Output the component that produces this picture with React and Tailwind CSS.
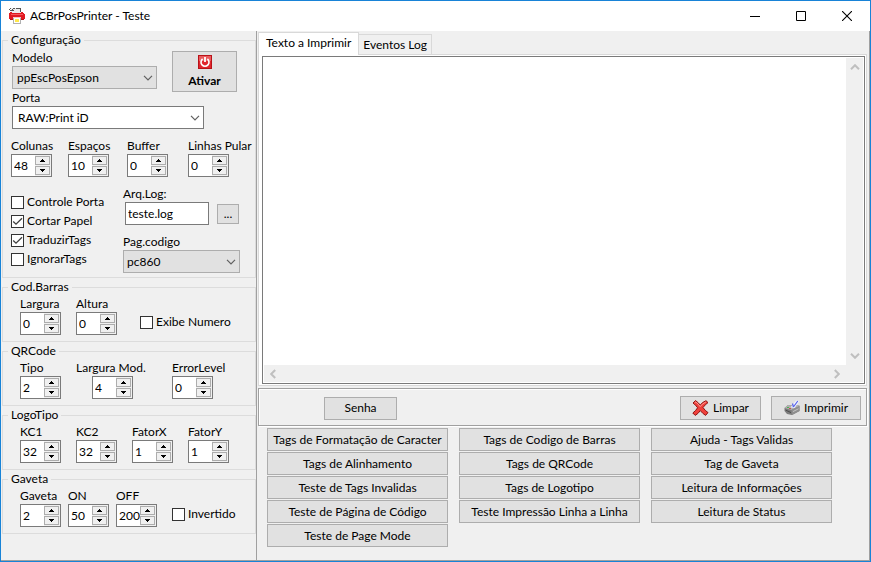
import { useState } from "react";

const MODELS = ["ppEscPosEpson", "ppEscBematech", "ppEscDaruma", "ppEscElgin"];
const PORTS = ["RAW:Print iD", "COM1", "COM2", "LPT1"];
const CODE_PAGES = ["pc860", "pc437", "pc850", "pc852", "pc1252"];

const ACTIONS = [
  "Tags de Formatação de Caracter",
  "Tags de Codigo de Barras",
  "Ajuda - Tags Validas",
  "Tags de Alinhamento",
  "Tags de QRCode",
  "Tag de Gaveta",
  "Teste de Tags Invalidas",
  "Tags de Logotipo",
  "Leitura de Informações",
  "Teste de Página de Código",
  "Teste Impressão Linha a Linha",
  "Leitura de Status",
  "Teste de Page Mode",
];

function Button({ className = "", children, ...props }) {
  return (
    <button
      type="button"
      className={`flex items-center justify-center border border-[#adadad] bg-[#e1e1e1] whitespace-nowrap ${className}`}
      {...props}
    >
      {children}
    </button>
  );
}

function Chevron({ className = "", color = "#606060", width = 1.2 }) {
  return (
    <svg className={className} width="10" height="6" viewBox="0 0 10 6" fill="none" aria-hidden="true">
      <path d="M1 0.8 L5 4.8 L9 0.8" stroke={color} strokeWidth={width} />
    </svg>
  );
}

function Group({ title, className = "", children }) {
  return (
    <fieldset className="ml-px min-w-0 border border-[#dcdcdc]">
      <legend className="ml-[5px] h-4 px-[3px]">{title}</legend>
      <div className={className}>{children}</div>
    </fieldset>
  );
}

function Combo({ id, label, options, className = "", selectClass = "" }) {
  return (
    <div className={className}>
      <label htmlFor={id} className="block h-4">
        {label}
      </label>
      <div className="relative">
        <select id={id} className={`block h-[23px] w-full appearance-none border outline-none ${selectClass}`}>
          {options.map((o) => (
            <option key={o}>{o}</option>
          ))}
        </select>
        <Chevron className="pointer-events-none absolute top-[9px] right-[4px]" />
      </div>
    </div>
  );
}

function Spin({ id, label, initial, className = "", boxClass = "" }) {
  const [value, setValue] = useState(initial);

  return (
    <div className={`shrink-0 ${className}`}>
      <label htmlFor={id} className="block h-4 whitespace-nowrap">
        {label}
      </label>
      <div className={`flex h-[23px] w-[41px] border border-[#7a7a7a] bg-white ${boxClass}`}>
        <input
          id={id}
          className="w-0 flex-1 pl-[2px] outline-none"
          value={value}
          onChange={(e) => setValue(Number(e.target.value) || 0)}
        />
        <div className="flex w-4 flex-col gap-px bg-[#f0f0f0] pt-px pr-px">
          <button
            type="button"
            aria-label={`${label} +`}
            className="flex h-[9px] items-center justify-center border border-[#adadad]"
            onClick={() => setValue(value + 1)}
          >
            <svg width="5" height="3" viewBox="0 0 5 3" aria-hidden="true">
              <path d="M2 0h1v1h1v1h1v1H0V2h1V1h1z" />
            </svg>
          </button>
          <button
            type="button"
            aria-label={`${label} -`}
            className="flex h-[9px] items-center justify-center border border-[#adadad]"
            onClick={() => setValue(value - 1)}
          >
            <svg width="5" height="3" viewBox="0 0 5 3" aria-hidden="true">
              <path d="M0 0h5v1H4v1H3v1H2V2H1V1H0z" />
            </svg>
          </button>
        </div>
      </div>
    </div>
  );
}

function Check({ label, checked = false, className = "" }) {
  return (
    <label className={`flex items-center gap-[3px] whitespace-nowrap ${className}`}>
      <span className="relative flex">
        <input
          type="checkbox"
          defaultChecked={checked}
          className="peer size-[13px] appearance-none border border-[#333333] bg-white"
        />
        <svg
          className="pointer-events-none absolute inset-0 hidden peer-checked:block"
          width="13"
          height="13"
          viewBox="0 0 13 13"
          fill="none"
          aria-hidden="true"
        >
          <path d="M2.2 6.5 L5 9.2 L11 3.2" stroke="#404040" strokeWidth="1.3" />
        </svg>
      </span>
      {label}
    </label>
  );
}

function AppIcon() {
  return (
    <svg width="16" height="16" viewBox="0 0 16 16" shapeRendering="crispEdges" aria-hidden="true">
      <path d="M2 0h10v6H2z" fill="#ececec" />
      <path d="M0 1h1v1H0zM1 0h1v1H1zM1 2h2v1H1zM3 1h1v2H3zM4 0h2v1H4zM7 0h5v1H7zM4 2h1v1H4zM11 1h1v3h-1z" fill="#555" />
      <path d="M1 4h2v1h9V4h2v1h1v1h1v5h-1v1H1v-1H0V5h1z" fill="#e01b22" />
      <path d="M2 6h12v1H2z" fill="#f4595d" />
      <path d="M1 11h14v1H1z" fill="#b81016" />
      <path d="M4 9h8v1H4z" fill="#f7c6c7" />
      <path d="M4 10h8v6H4z" fill="#b0b0b0" />
      <path d="M5 10h6v5H5z" fill="#fff" />
      <path d="M6 11h4v3H6z" fill="#ffe84a" />
    </svg>
  );
}

function PowerIcon() {
  return (
    <svg width="14" height="14" viewBox="0 0 14 14" fill="none" aria-hidden="true">
      <path d="M0 0h14v14H0z" fill="#b81218" />
      <path d="M1 1h12v12H1z" fill="#e0262c" />
      <path d="M1 1h12v5H1z" fill="#ea5a5e" />
      <path d="M4.6 4 A4 4 0 1 0 9.4 4" stroke="#fff" strokeWidth="1.6" />
      <path d="M7 2v5" stroke="#fff" strokeWidth="1.8" />
    </svg>
  );
}

function DeleteIcon() {
  return (
    <svg width="17" height="16" viewBox="0 0 17 16" aria-hidden="true">
      <path
        d="M1 3 L3.5 0.6 Q6 2.2 8.2 5 Q10.5 2 14 0.7 L16 2.6 Q13 4.6 11 7.6 Q13.2 10.8 16 12.6 L13.6 15.4 Q10.6 13.6 8.3 10.6 Q6.2 13.8 3.2 15.4 L0.8 13 Q3.8 10.8 5.6 7.8 Q3.8 5 1 3z"
        fill="#f0403c"
        stroke="#8e1411"
        strokeWidth="1"
      />
      <path d="M2.6 3 L3.8 2 Q6.2 3.8 8.2 6.6 Q10.4 3.6 13.8 2" stroke="#ff9a94" strokeWidth="1" fill="none" />
    </svg>
  );
}

function PrintIcon() {
  return (
    <svg width="16" height="16" viewBox="0 0 16 16" aria-hidden="true">
      <path d="M0.5 8 L4 5 L10 5.5 L15.5 5.5 V11 L8 15 L3 14 L0.5 11z" fill="#7d7d7d" />
      <path d="M0.5 8 L4 5 L10 5.5 L15.5 6 L7.5 10z" fill="#b0b0b0" />
      <path d="M7.5 10 L15.5 6 V11 L8 15z" fill="#8f8f8f" />
      <path d="M9 11.6 L14.5 8.8" stroke="#c4c4c4" strokeWidth="1" />
      <path d="M6.5 7.6 L12 0.6 L15.5 1 L10.6 8z" fill="#eef1ff" />
      <path d="M8.5 3.5 L9.4 7 M9.4 7 L13.8 1" stroke="#5560e8" strokeWidth="1.2" />
      <path d="M1.5 10 L7 12.6" stroke="#4b4b4b" strokeWidth="1" />
      <path d="M3 7h2v1H3z" fill="#4fae4f" />
      <path d="M5 8h2v1H5z" fill="#c9504b" />
    </svg>
  );
}

function TitleBar() {
  return (
    <header className="flex h-[30px] shrink-0 items-center bg-white pl-2">
      <AppIcon />
      <h1 className="flex-1 pl-[5px]">ACBrPosPrinter - Teste</h1>
      <button type="button" aria-label="Minimizar" className="flex h-full w-[46px] items-center justify-center">
        <svg width="10" height="10" viewBox="0 0 10 10" aria-hidden="true">
          <path d="M0 5h10v1H0z" />
        </svg>
      </button>
      <button type="button" aria-label="Maximizar" className="flex h-full w-[46px] items-center justify-center">
        <svg width="10" height="10" viewBox="0 0 10 10" fill="none" aria-hidden="true">
          <path d="M0.5 0.5h9v9h-9z" stroke="#000" />
        </svg>
      </button>
      <button type="button" aria-label="Fechar" className="flex h-full w-[46px] items-center justify-center">
        <svg width="10" height="10" viewBox="0 0 10 10" fill="none" aria-hidden="true">
          <path d="M0 0 L10 10 M10 0 L0 10" stroke="#000" strokeWidth="1.1" />
        </svg>
      </button>
    </header>
  );
}

function Sidebar() {
  return (
    <aside className="flex w-64 shrink-0 flex-col gap-px border-r border-[#a0a0a0] pt-px">
      <Group title="Configuração" className="pt-[2px] pb-1 pl-2">
        <div className="flex items-start gap-[15px] pl-px">
          <div className="flex w-[145px] flex-col gap-px">
            <Combo
              id="modelo"
              label="Modelo"
              options={MODELS}
              selectClass="border-[#adadad] bg-[#e1e1e1] pl-1"
            />
            <Combo
              id="porta"
              label="Porta"
              options={PORTS}
              className="w-48"
              selectClass="border-[#7a7a7a] bg-white pl-[5px]"
            />
          </div>
          <Button className="mt-px h-[41px] w-[65px] flex-col gap-1 leading-4 font-bold">
            <PowerIcon />
            Ativar
          </Button>
        </div>

        <div className="mt-[9px] flex">
          <Spin id="colunas" label="Colunas" initial={48} className="w-[57px]" />
          <Spin id="espacos" label="Espaços" initial={10} className="w-[59px]" />
          <Spin id="buffer" label="Buffer" initial={0} className="w-[61px]" />
          <Spin id="linhas" label="Linhas Pular" initial={0} className="w-[41px]" />
        </div>

        <div className="mt-[9px] flex">
          <div className="flex w-28 flex-col gap-[3px] pt-2">
            <Check label="Controle Porta" />
            <Check label="Cortar Papel" checked />
            <Check label="TraduzirTags" checked />
            <Check label="IgnorarTags" />
          </div>
          <div>
            <label htmlFor="arqlog" className="block h-4">
              Arq.Log:
            </label>
            <div className="flex items-center gap-2 pl-[2px]">
              <input
                id="arqlog"
                defaultValue="teste.log"
                className="h-[23px] w-[84px] border border-[#7a7a7a] bg-white pl-[2px] outline-none"
              />
              <Button className="h-5 w-[22px]">...</Button>
            </div>
            <Combo
              id="pagcodigo"
              label="Pag.codigo"
              options={CODE_PAGES}
              className="mt-[9px] w-[117px]"
              selectClass="border-[#adadad] bg-[#e1e1e1] pl-[3px]"
            />
          </div>
        </div>
      </Group>

      <Group title="Cod.Barras" className="flex pt-px pb-[6px] pl-[17px]">
        <Spin id="largura" label="Largura" initial={0} className="w-14" />
        <Spin id="altura" label="Altura" initial={0} className="w-16" />
        <Check label="Exibe Numero" className="pt-[13px]" />
      </Group>

      <Group title="QRCode" className="flex pt-px pb-[6px] pl-[17px]">
        <Spin id="tipo" label="Tipo" initial={2} className="w-14" />
        <Spin id="larguramod" label="Largura Mod." initial={4} className="w-24" boxClass="ml-4" />
        <Spin id="errorlevel" label="ErrorLevel" initial={0} className="w-14" />
      </Group>

      <Group title="LogoTipo" className="flex pt-px pb-[6px] pl-[17px]">
        <Spin id="kc1" label="KC1" initial={32} className="w-14" />
        <Spin id="kc2" label="KC2" initial={32} className="w-14" />
        <Spin id="fatorx" label="FatorX" initial={1} className="w-14" />
        <Spin id="fatory" label="FatorY" initial={1} className="w-[41px]" />
      </Group>

      <Group title="Gaveta" className="flex pt-px pb-[6px] pl-[17px]">
        <Spin id="gaveta" label="Gaveta" initial={2} className="w-12" />
        <Spin id="on" label="ON" initial={50} className="w-12" />
        <Spin id="off" label="OFF" initial={200} className="w-14" />
        <Check label="Invertido" className="pt-[13px]" />
      </Group>
    </aside>
  );
}

function Memo() {
  return (
    <div className="flex flex-1 flex-col border border-[#7a7a7a] bg-white p-px">
      <div className="flex flex-1">
        <textarea aria-label="Texto a Imprimir" className="flex-1 resize-none p-1 outline-none" />
        <div className="flex w-[17px] flex-col items-center justify-between bg-[#f0f0f0] py-[6px]">
          <Chevron className="rotate-180" color="#bfbfbf" width={2} />
          <Chevron color="#bfbfbf" width={2} />
        </div>
      </div>
      <div className="flex h-[17px] items-center justify-between bg-[#f0f0f0] pr-[21px] pl-1">
        <Chevron className="rotate-90" color="#bfbfbf" width={2} />
        <Chevron className="-rotate-90" color="#bfbfbf" width={2} />
      </div>
    </div>
  );
}

export default function App() {
  const [tab, setTab] = useState("texto");

  return (
    <div className="flex min-h-screen flex-col border border-[#1883d7] bg-[#f0f0f0] font-[Lato,'Open_Sans',sans-serif] text-[12px] leading-4 text-black">
      <TitleBar />
      <div className="flex flex-1 border-r border-b border-[#a0a0a0]">
        <Sidebar />

        <main className="flex min-w-0 flex-1 flex-col pt-px pr-[2px] pl-px">
          <div role="tablist" className="flex items-end">
            <button
              type="button"
              role="tab"
              aria-selected={tab === "texto"}
              className="relative z-10 -mb-px h-[23px] border border-b-0 border-[#d9d9d9] bg-white px-[7px] pb-[2px]"
              onClick={() => setTab("texto")}
            >
              Texto a Imprimir
            </button>
            <button
              type="button"
              role="tab"
              aria-selected={tab === "log"}
              className="h-5 border border-b-0 border-l-0 border-[#d9d9d9] px-1"
              onClick={() => setTab("log")}
            >
              Eventos Log
            </button>
          </div>
          <div className="flex flex-1 flex-col border border-[#d9d9d9] bg-white py-px pr-px pl-[3px]">
            <Memo />
          </div>

          <div className="mt-[2px] flex items-center border border-[#a0a0a0] px-[5px] pt-[7px] pb-[5px] shadow-[inset_1px_1px_0_#fff,1px_1px_0_#fff]">
            <Button className="ml-[60px] h-[23px] w-[73px]">Senha</Button>
            <div className="ml-auto flex gap-[10px]">
              <Button className="h-6 w-[81px] gap-1">
                <DeleteIcon />
                Limpar
              </Button>
              <Button className="h-6 w-[90px] gap-1">
                <PrintIcon />
                Imprimir
              </Button>
            </div>
          </div>

          <div className="grid grid-cols-3 gap-x-[11px] gap-y-px pt-[2px] pr-[35px] pb-[13px] pl-[9px]">
            {ACTIONS.map((label) => (
              <Button key={label} className="h-[23px]">
                {label}
              </Button>
            ))}
          </div>
        </main>
      </div>
    </div>
  );
}
